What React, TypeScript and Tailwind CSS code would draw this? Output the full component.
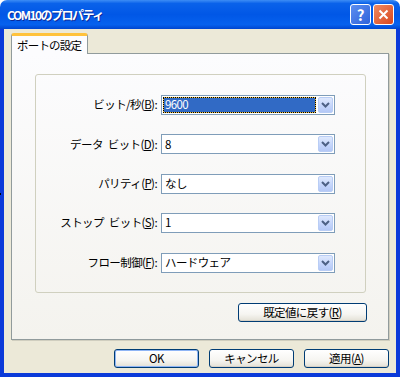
import React from "react";

const rows = [
  { pre: ["ビット/秒("], key: "B", value: "9600", selected: true },
  { pre: ["データ", "ビット("], key: "D", value: "8" },
  { pre: ["パリティ("], key: "P", value: "なし" },
  { pre: ["ストップ", "ビット("], key: "S", value: "1" },
  { pre: ["フロー制御("], key: "F", value: "ハードウェア" },
];

function Chevron() {
  return (
    <svg width="9" height="6" viewBox="0 0 9 6">
      <path d="M1 1 L4.5 4.5 L8 1" fill="none" stroke="#4d6185" strokeWidth="2" />
    </svg>
  );
}

function Combo({ value, selected }: { value: string; selected?: boolean }) {
  return (
    <div className="flex h-[20px] w-[174px] items-stretch border border-[#7f9db9] bg-white p-[1px]">
      <div className="flex flex-1 items-stretch pr-[2px]">
        {selected ? (
          <div className="flex flex-1 border border-dotted border-black bg-[#f0c040]">
            <div className="flex flex-1 items-center bg-[#316ac5] pl-[1px] text-white">{value}</div>
          </div>
        ) : (
          <div className="flex flex-1 items-center pl-[2px] text-black">{value}</div>
        )}
      </div>
      <div className="flex w-[15px] items-center justify-center rounded-[2px] border border-[#b9cdf5] bg-[linear-gradient(to_bottom,#dfe9fd,#c3d4fb_60%,#b4c8f6)]">
        <Chevron />
      </div>
    </div>
  );
}

function Btn({ children, isDefault }: { children: React.ReactNode; isDefault?: boolean }) {
  return (
    <div
      className={
        "flex h-[19px] items-center justify-center rounded-[3px] border border-[#003c74] bg-[linear-gradient(to_bottom,#ffffff,#f6f5f1_60%,#e3e0d5)] text-black " +
        (isDefault ? "shadow-[inset_0_0_0_1px_#8fb5f5]" : "shadow-[inset_0_-1px_0_#d6d0c5]")
      }
    >
      {children}
    </div>
  );
}

export default function App() {
  return (
    <div className="relative flex h-[377px] w-[400px] flex-col overflow-hidden font-['Noto_Sans_CJK_JP',sans-serif] text-[11.5px] leading-none tracking-[-0.6px]">
      {/* title bar */}
      <div className="flex h-[29px] items-center rounded-t-[7px] bg-[linear-gradient(to_bottom,#3d8df5_0%,#0a62ea_12%,#0157e6_50%,#0661ee_85%,#0045cf_100%)] pl-[7px] pr-[6px]">
        <span className="text-[12px] font-bold tracking-[-1.5px] text-white [text-shadow:1px_1px_0_#0b2a9a]">COM10のプロパティ</span>
        <div className="ml-auto flex gap-[2px]">
          <div className="flex h-[21px] w-[21px] items-center justify-center rounded-[3px] border border-white bg-[linear-gradient(135deg,#5d8ff0,#2e62da)] text-[15px] font-bold tracking-normal text-white">
            ?
          </div>
          <div className="flex h-[21px] w-[21px] items-center justify-center rounded-[3px] border border-white bg-[linear-gradient(135deg,#ef8b62,#d9461e)]">
            <svg width="11" height="11" viewBox="0 0 11 11">
              <path d="M1.5 1.5 L9.5 9.5 M9.5 1.5 L1.5 9.5" stroke="white" strokeWidth="2" />
            </svg>
          </div>
        </div>
      </div>
      {/* body with frame */}
      <div className="flex flex-1 bg-[#0b3ad9] px-[4px] pb-[4px]">
        <div className="flex flex-1 flex-col bg-[#ece9d8] px-[7px]">
          {/* tab */}
          <div className="mt-[4px] flex h-[20px]">
            <div className="relative z-10 mb-[-1px] flex w-[77px] items-center whitespace-nowrap rounded-t-[3px] border-x border-t-[3px] border-x-[#919b9c] border-t-[#ffc23c] bg-[#fcfcfe] pl-[5px] pt-[1px] tracking-[-0.8px]">
              ポートの設定
            </div>
          </div>
          {/* panel */}
          <div className="flex h-[287px] flex-col border border-[#919b9c] bg-[linear-gradient(to_bottom,#fcfcfe,#f4f3ee)] shadow-[1px_1px_0_#d0cebf]">
            <div className="ml-[23px] mr-[22px] mt-[20px] flex h-[219px] flex-col gap-[19.4px] rounded-[3px] border border-[#d0d0bf] pt-[20px]">
              {rows.map((r) => (
                <div key={r.key} className="flex h-[20px] items-center">
                  <div className="flex w-[125px] justify-end whitespace-nowrap pr-[4px] text-black">
                    {r.pre.map((p, i) => (
                      <span key={i} className={i > 0 ? "ml-[5px]" : ""}>
                        {p}
                      </span>
                    ))}
                    <span className="underline">{r.key}</span>
                    <span>):</span>
                  </div>
                  <Combo value={r.value} selected={r.selected} />
                </div>
              ))}
            </div>
            <div className="mr-[21px] mt-[10px] flex justify-end">
              <div className="w-[129px]">
                <Btn>
                  既定値に戻す(<span className="underline">R</span>)
                </Btn>
              </div>
            </div>
          </div>
          {/* buttons */}
          <div className="mt-[9px] flex justify-end gap-[10px]">
            <div className="w-[85px]">
              <Btn isDefault>OK</Btn>
            </div>
            <div className="w-[85px]">
              <Btn>キャンセル</Btn>
            </div>
            <div className="w-[85px]">
              <Btn>
                適用(<span className="underline">A</span>)
              </Btn>
            </div>
          </div>
        </div>
      </div>
      <div className="absolute left-0 top-[193px] h-[2px] w-[1px] bg-black" />
    </div>
  );
}
